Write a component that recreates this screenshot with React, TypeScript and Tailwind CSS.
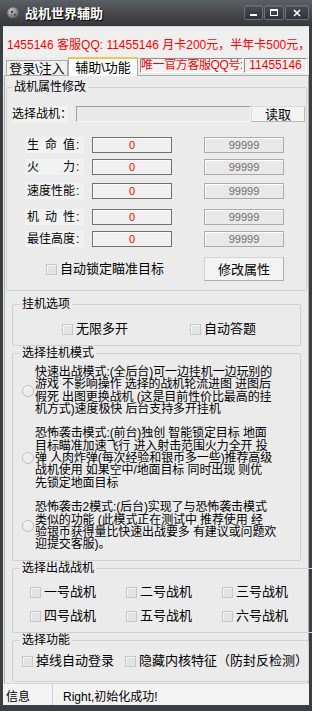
import React from "react";

const font = "font-['Liberation_Sans','Noto_Sans_CJK_SC',sans-serif]";

const CheckBox: React.FC<{ label: string }> = ({ label }) => (
  <div className="flex items-center gap-[3px] h-[14px]">
    <span className="w-[11px] h-[11px] shrink-0 border border-[#c6c6c6] bg-[#e3e3e3] shadow-[inset_1px_1px_0_#f6f6f6]" />
    <span className="leading-[14px] whitespace-nowrap">{label}</span>
  </div>
);

const Radio = () => (
  <span className="block w-[12px] h-[12px] rounded-full border border-[#bdbdbd] bg-[#ededed] shadow-[inset_1px_1px_0_#f8f8f8]" />
);

const Group: React.FC<{ title: string; className?: string; children: React.ReactNode }> = ({
  title,
  className,
  children,
}) => (
  <fieldset className={`border border-[#d0d0d0] rounded-[2px] ${className ?? ""}`}>
    <legend className="ml-[7px] px-[2px] leading-[14px]">{title}</legend>
    {children}
  </fieldset>
);

const FieldLabel: React.FC<{ chars: string[] }> = ({ chars }) => (
  <div className="w-[59px] h-[16px] bg-[#f2f2f2] flex items-center pl-[2px] leading-[16px]">
    <div className="w-[48px] flex justify-between">
      {chars.map((c, i) => (
        <span key={i}>{c}</span>
      ))}
    </div>
    <span className="ml-[1px]">:</span>
  </div>
);

const AttrRow: React.FC<{ chars: string[]; mt: string }> = ({ chars, mt }) => (
  <div className={`flex items-center h-[16px] ${mt}`}>
    <div className="ml-[18px]">
      <FieldLabel chars={chars} />
    </div>
    <div className="ml-[8px] w-[80px] h-[16px] border border-[#707070] bg-[#f0f0f0] shadow-[inset_1px_1px_0_#fafafa] flex items-center justify-center text-[11px] text-[#ff0000] leading-none">
      0
    </div>
    <div className="ml-[32px] w-[80px] h-[16px] border border-[#ababab] bg-[#e8e8e8] shadow-[inset_1px_1px_0_#ffffff] flex items-center justify-center text-[11px] text-[#6e6e6e] leading-none">
      99999
    </div>
  </div>
);

const modes: string[][] = [
  [
    "快速出战模式:(全后台)可一边挂机一边玩别的",
    "游戏 不影响操作 选择的战机轮流进图 进图后",
    "假死 出图更换战机 (这是目前性价比最高的挂",
    "机方式)速度极快 后台支持多开挂机",
  ],
  [
    "恐怖袭击模式:(前台)独创 智能锁定目标 地面",
    "目标瞄准加速飞行 进入射击范围火力全开 投",
    "弹 人肉炸弹(每次经验和银币多一些)推荐高级",
    "战机使用 如果空中/地面目标 同时出现 则优",
    "先锁定地面目标",
  ],
  [
    "恐怖袭击2模式:(后台)实现了与恐怖袭击模式",
    "类似的功能 (此模式正在测试中 推荐使用 经",
    "验银币获得量比快速出战要多 有建议或问题欢",
    "迎提交客服)。",
  ],
];

const WinButton: React.FC<{ w: string; children: React.ReactNode }> = ({ w, children }) => (
  <div
    className={`${w} h-[15px] rounded-[2px] border border-[#6c6f74] bg-gradient-to-b from-[#4a4d52] to-[#2f3236] shadow-[inset_0_1px_0_#5e6166] flex items-center justify-center`}
  >
    {children}
  </div>
);

export default function App() {
  return (
    <div className={`w-[312px] h-[711px] bg-[#3b3e42] flex flex-col text-[12px] text-black ${font}`}>
      {/* title bar */}
      <div className="h-[26px] shrink-0 bg-gradient-to-b from-[#5c5f63] via-[#47494d] to-[#35383c] flex items-center pl-[7px] pr-[3px]">
        <svg width="12" height="12" viewBox="0 0 12 12" className="shrink-0">
          <defs>
            <radialGradient id="ball" cx="0.4" cy="0.35" r="0.7">
              <stop offset="0" stopColor="#d6d6d6" />
              <stop offset="0.6" stopColor="#8a8a8a" />
              <stop offset="1" stopColor="#4a4a4a" />
            </radialGradient>
          </defs>
          <circle cx="6" cy="6" r="5.8" fill="url(#ball)" />
          <path d="M3.5 4.5 L5.5 3.5 L6.5 5 L5 6.5 Z M7 7 L8.8 6.4 L8.4 8.6 L6.6 8.6 Z M3.6 7.6 L5 7.4 L5.2 9 Z" fill="#333" />
        </svg>
        <span className="ml-[6px] text-[13px] font-bold text-white leading-none [text-shadow:1px_1px_1px_#000]">
          战机世界辅助
        </span>
        <div className="ml-auto flex items-center gap-[1px] self-start mt-[5px]">
          <WinButton w="w-[19px]">
            <span className="w-[7px] h-[2px] bg-white mt-[5px]" />
          </WinButton>
          <WinButton w="w-[20px]">
            <span className="w-[8px] h-[7px] border border-white border-t-2" />
          </WinButton>
          <WinButton w="w-[24px]">
            <svg width="8" height="8" viewBox="0 0 8 8">
              <path d="M1 1 L7 7 M7 1 L1 7" stroke="#fff" strokeWidth="1.6" />
            </svg>
          </WinButton>
        </div>
      </div>

      {/* window body */}
      <div className="mx-[3px] w-[306px] h-[679px] bg-[#ebebeb] flex flex-col">
        {/* scrolling notice */}
        <div className="h-[31px] border-t border-[#d6d6d6] bg-[#efefef] overflow-hidden pl-[4px] pt-[11px]">
          <div className="whitespace-nowrap text-[#ff0000] leading-[14px]">
            1455146 客服QQ: 11455146 月卡200元，半年卡500元，年卡800元
          </div>
        </div>

        {/* tabs row */}
        <div className="h-[18px] flex items-end relative">
          <div className="ml-[3px] w-[62px] h-[15px] border border-b-0 border-[#a9a9a9] bg-[#f0f0f0] flex items-center justify-center text-[13px] leading-none">
            登录\注入
          </div>
          <div className="w-[70px] h-[19px] -mb-[1px] relative z-10 border border-b-0 border-[#a9a9a9] border-t-2 border-t-[#f2c25c] bg-white flex items-center justify-center text-[13px] leading-none">
            辅助\功能
          </div>
          <div className="self-start mt-[1px] ml-[2px] w-[103px] h-[15px] border border-[#8d8d8d] border-r-white border-b-white bg-[#f2f2f2] text-[#ff0000] text-[12px] leading-[13px] tracking-[-0.4px] whitespace-nowrap overflow-hidden">
            唯一官方客服QQ号:
          </div>
          <div className="self-start mt-[1px] ml-[1px] w-[63px] h-[15px] border border-[#8d8d8d] border-r-white border-b-white bg-[#f0f0f0] text-[#ff0000] text-[12px] leading-[13px] text-center">
            11455146
          </div>
        </div>

        {/* tab page */}
        <div className="ml-[1px] w-[305px] h-[608px] border border-b-0 border-[#acacac] pt-[4px]">
          {/* 战机属性修改 */}
          <fieldset className="ml-[1px] w-[301px] border border-[#d0d0d0] rounded-[2px] pb-[9px]">
            <legend className="ml-[5px] px-[2px] leading-[14px]">战机属性修改</legend>
            <div className="flex items-center h-[16px] mt-[12px]">
              <div className="ml-[5px] w-[56px] h-[16px] bg-[#f2f2f2] leading-[16px] whitespace-nowrap">
                选择战机：
              </div>
              <div className="ml-[8px] w-[175px] h-[16px] border border-[#9e9e9e] border-r-[#f4f4f4] border-b-[#f4f4f4] bg-[#e9e9e9]" />
              <div className="w-[54px] h-[16px] border border-[#dadada] border-r-[#b8b8b8] border-b-[#b8b8b8] bg-[#f4f4f4] flex items-center justify-center text-[13px] leading-none">
                读取
              </div>
            </div>
            <AttrRow chars={["生", "命", "值"]} mt="mt-[15px]" />
            <AttrRow chars={["火", "力"]} mt="mt-[6px]" />
            <AttrRow chars={["速", "度", "性", "能"]} mt="mt-[8px]" />
            <AttrRow chars={["机", "动", "性"]} mt="mt-[10px]" />
            <AttrRow chars={["最", "佳", "高", "度"]} mt="mt-[6px]" />
            <div className="flex items-center h-[24px] mt-[10px]">
              <div className="ml-[39px] w-[158px] text-[13px]">
                <CheckBox label="自动锁定瞄准目标" />
              </div>
              <div className="w-[80px] h-[24px] border border-[#d4d4d4] border-r-[#adadad] border-b-[#adadad] bg-[#f3f3f3] flex items-center justify-center text-[13px] leading-none">
                修改属性
              </div>
            </div>
          </fieldset>

          {/* 挂机选项 */}
          <Group title="挂机选项" className="ml-[7px] w-[289px] mt-[6px] pb-[9px]">
            <div className="flex items-center mt-[11px] text-[13px]">
              <div className="ml-[49px] w-[128px]">
                <CheckBox label="无限多开" />
              </div>
              <CheckBox label="自动答题" />
            </div>
          </Group>

          {/* 选择挂机模式 */}
          <Group title="选择挂机模式" className="ml-[7px] w-[289px] pt-[6px] pb-[10px]">
            {modes.map((lines, i) => (
              <div key={i} className={`flex items-center ${i > 0 ? "mt-[12.3px]" : ""}`}>
                <div className="ml-[9px] shrink-0">
                  <Radio />
                </div>
                <div className="ml-[1px] leading-[12.3px] tracking-[-0.1px]">
                  {lines.map((l, j) => (
                    <div key={j} className="whitespace-nowrap">
                      {l}
                    </div>
                  ))}
                </div>
              </div>
            ))}
          </Group>

          {/* 选择出战战机 */}
          <Group title="选择出战战机" className="ml-[7px] w-[289px] pt-[10px] pb-[9px]">
            <div className="ml-[17px] grid grid-cols-[96px_96px_96px] gap-y-[10px] text-[13px]">
              {["一号战机", "二号战机", "三号战机", "四号战机", "五号战机", "六号战机"].map((n) => (
                <CheckBox key={n} label={n} />
              ))}
            </div>
          </Group>

          {/* 选择功能 */}
          <Group title="选择功能" className="ml-[7px] w-[289px] pt-[7px] pb-[13px]">
            <div className="flex items-center ml-[9px] gap-[11px] text-[13px]">
              <CheckBox label="掉线自动登录" />
              <CheckBox label="隐藏内核特征（防封反检测）" />
            </div>
          </Group>
        </div>

        {/* status bar */}
        <div className="h-[22px] flex border-t border-[#d8d8d8] bg-[#f3f3f3] text-[12px]">
          <div className="w-[50px] border-r border-[#d0d0d0] pl-[3px] pt-[6px] leading-[14px]">信息</div>
          <div className="pl-[10px] pt-[6px] leading-[14px] whitespace-nowrap">Right,初始化成功!</div>
        </div>
      </div>
    </div>
  );
}
